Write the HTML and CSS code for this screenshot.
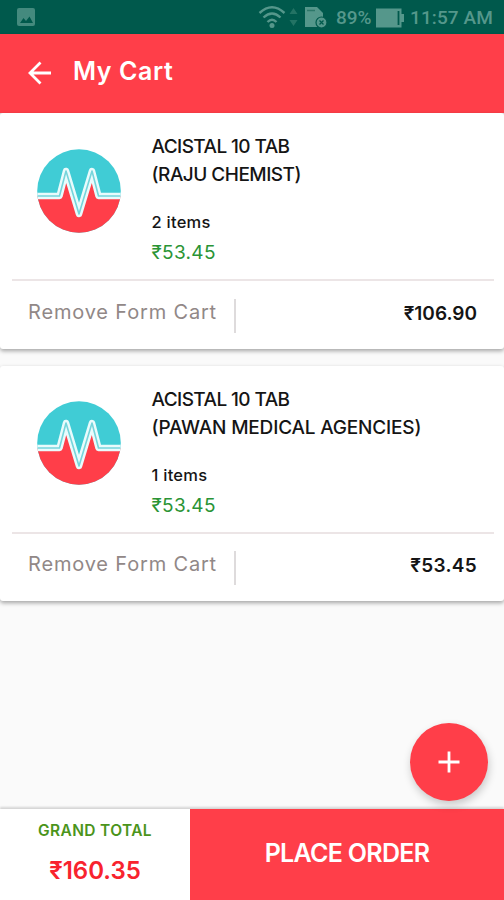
FILE: index.html
```html
<!DOCTYPE html>
<html lang="en">
<head>
<meta charset="utf-8">
<title>My Cart</title>
<link rel="stylesheet" href="styles.css">
</head>
<body>
<svg width="0" height="0" class="defs">
  <clipPath id="disc"><circle cx="42" cy="42" r="41.800"/></clipPath>
  <symbol id="pulse" viewBox="0 0 84 84">
    <g clip-path="url(#disc)">
      <path d="M0 0H84V84H0z" fill="#40ccd5"/>
      <path d="M0 47H22L29 32 41 66 54 32 62 47H84V84H0Z" fill="#ff3e49"/>
      <path d="M0 47H22.500L29 22 42 65 55 22 61.500 47H84" fill="none" stroke="#e9fbfc" stroke-width="6.500" stroke-linejoin="round"/>
      <path d="M0 47H22.500L29 22 42 65 55 22 61.500 47H84" fill="none" stroke="#76d5db" stroke-width="1.600" stroke-linejoin="round"/>
    </g>
  </symbol>
</svg>
<div class="screen">
  <div class="status">
    <svg class="status-image" width="18" height="18" viewBox="0 0 18 18"><rect width="18" height="18" rx="2" fill="#448a7e"/><path d="M3 15l3.500-5 2.500 3 3.500-4.500L16 15z" fill="#00594c"/></svg>
    <svg class="status-icons" width="70" height="26" viewBox="0 0 70 26" fill="none" stroke="#55978b" stroke-width="2.400">
      <path d="M1.500 11Q14 -.5 26.500 11M5.500 15.500Q14 7.500 22.500 15.500M9.500 20Q14 15.500 18.500 20"/>
      <circle cx="14" cy="23.500" r="2.500" fill="#55978b" stroke="none"/>
      <path d="M31.500 12l4-6 4 6zM31.500 18l4 6 4-6z" fill="#237364" stroke="none"/>
      <path d="M47 5H59L65 11V25H47z" fill="#55978b" stroke="none"/>
      <path d="M49 8.500h8" stroke="#2d7769" stroke-width="1.500"/>
      <circle cx="63.500" cy="20.500" r="5.500" fill="#55978b" stroke="#00594c" stroke-width="1.200"/>
      <path d="M61.500 18.500l4 4m0-4l-4 4" stroke="#00594c" stroke-width="1.300"/>
    </svg>
    <span class="battery-text">89%</span>
    <svg class="battery" width="28" height="20" viewBox="0 0 28 20"><path d="M0 .5H25.500V6H28V14H25.500V19.500H0z" fill="#55978b"/><path d="M22.500 3v14" stroke="#00594c" stroke-width="1.800"/></svg>
    <span class="clock">11:57 AM</span>
  </div>
  <header class="appbar">
    <svg class="back" width="24" height="24" viewBox="0 0 24 24" fill="none" stroke="#fff" stroke-width="2.800"><path d="M12.500 1.500L2 12 12.500 22.500M2 12H23"/></svg>
    <h1>My Cart</h1>
  </header>
  <main>
    <section class="card">
      <div class="product">
        <svg class="logo"><use href="#pulse"/></svg>
        <div class="info">
          <h2><span class="name">ACISTAL 10 TAB</span><br><span class="seller">(RAJU CHEMIST)</span></h2>
          <p class="count">2 items</p>
          <p class="price">₹53.45</p>
        </div>
      </div>
      <div class="actions"><span class="remove">Remove Form Cart</span><span class="sum">₹106.90</span></div>
    </section>
    <section class="card">
      <div class="product">
        <svg class="logo"><use href="#pulse"/></svg>
        <div class="info">
          <h2><span class="name">ACISTAL 10 TAB</span><br><span class="seller long">(PAWAN MEDICAL AGENCIES)</span></h2>
          <p class="count">1 items</p>
          <p class="price">₹53.45</p>
        </div>
      </div>
      <div class="actions"><span class="remove">Remove Form Cart</span><span class="sum wide">₹53.45</span></div>
    </section>
  </main>
  <button class="fab"><svg width="22" height="22" viewBox="0 0 22 22"><path d="M11 .5v21M.5 11h21" stroke="#fff" stroke-width="2.800"/></svg></button>
  <footer>
    <div class="total"><span class="total-label">GRAND TOTAL</span><span class="total-value">₹160.35</span></div>
    <div class="order"><span>PLACE ORDER</span></div>
  </footer>
</div>
</body>
</html>
```

FILE: styles.css
```css
* { box-sizing: border-box; margin: 0; padding: 0; }
body { font-family: Inter, "Noto Sans", sans-serif; color: #151515; background: #fafafa; }
.defs { display: block; }
.screen { position: relative; display: flex; flex-direction: column; width: 504px; height: 900px; overflow: hidden; }
.status { display: flex; flex: none; height: 34px; padding: 0 11px 0 17px; background: #00594c; color: #55978b; font: 500 19px/36px Roboto, sans-serif; }
.status-image { margin-top: 8px; }
.status-icons { margin: 2px 0 0 223px; }
.battery-text { margin-left: 8px; width: 40px; white-space: nowrap; }
.battery { margin-top: 8px; }
.clock { margin-left: 6px; white-space: nowrap; letter-spacing: .1px; }
.appbar { display: flex; flex: none; height: 79px; padding-left: 28px; background: #ff3e49; color: #fff; box-shadow: 0 1px 3px rgba(0,0,0,.25); }
.back { margin-top: 27px; }
h1 { margin: 17px 0 0 21px; font-size: 25px; font-weight: 600; line-height: 40px; letter-spacing: .6px; }
main { flex: 1; }
.card { height: 235.500px; margin-bottom: 17px; background: #fff; border-radius: 3px; box-shadow: 0 2px 4px rgba(0,0,0,.35); }
.product { display: flex; height: 168px; margin: 0 10px 0 12px; padding: 20px 0 0 24.500px; border-bottom: 2px solid #ece5e6; }
.logo { flex: none; width: 84px; height: 84px; margin-top: 15.500px; }
.info { margin-left: 31px; white-space: nowrap; }
h2 { font-size: 19px; font-weight: 500; line-height: 28px; }
.name { letter-spacing: -.58px; }
.seller { letter-spacing: -.52px; }
.long { letter-spacing: -.18px; }
.count { margin-top: 19px; font-size: 16.500px; line-height: 28px; font-weight: 500; letter-spacing: .25px; }
.price { margin-top: 3px; font-size: 19px; line-height: 28px; color: #2a9435; letter-spacing: .3px; }
.actions { display: flex; align-items: center; height: 64px; padding: 0 27px 0 28px; }
.remove { width: 208px; height: 34px; margin-top: 5px; border-right: 2px solid #dedbdc; color: #918887; font-size: 20px; line-height: 27px; letter-spacing: .83px; white-space: nowrap; }
.sum { margin-left: auto; font-size: 19px; font-weight: 600; }
.wide { letter-spacing: .3px; }
.fab { position: absolute; left: 410px; top: 723px; display: flex; align-items: center; justify-content: center; width: 78px; height: 78px; border: 0; border-radius: 50%; background: #ff3e49; box-shadow: 1px 4px 8px rgba(0,0,0,.2); }
footer { display: flex; flex: none; height: 91px; box-shadow: 0 -2px 2px rgba(0,0,0,.15); }
.total { display: flex; flex-direction: column; align-items: center; width: 190px; padding-top: 8px; background: #fff; }
.total-label { color: #4b941b; font-size: 15.500px; line-height: 28px; font-weight: 600; letter-spacing: .35px; }
.total-value { margin-top: 11px; color: #f8232e; font-size: 24px; line-height: 30px; font-weight: 600; }
.order { flex: 1; padding-top: 28px; background: #ff3e49; color: #fff; text-align: center; font-size: 25px; font-weight: 600; line-height: 32px; letter-spacing: -.7px; }
```
